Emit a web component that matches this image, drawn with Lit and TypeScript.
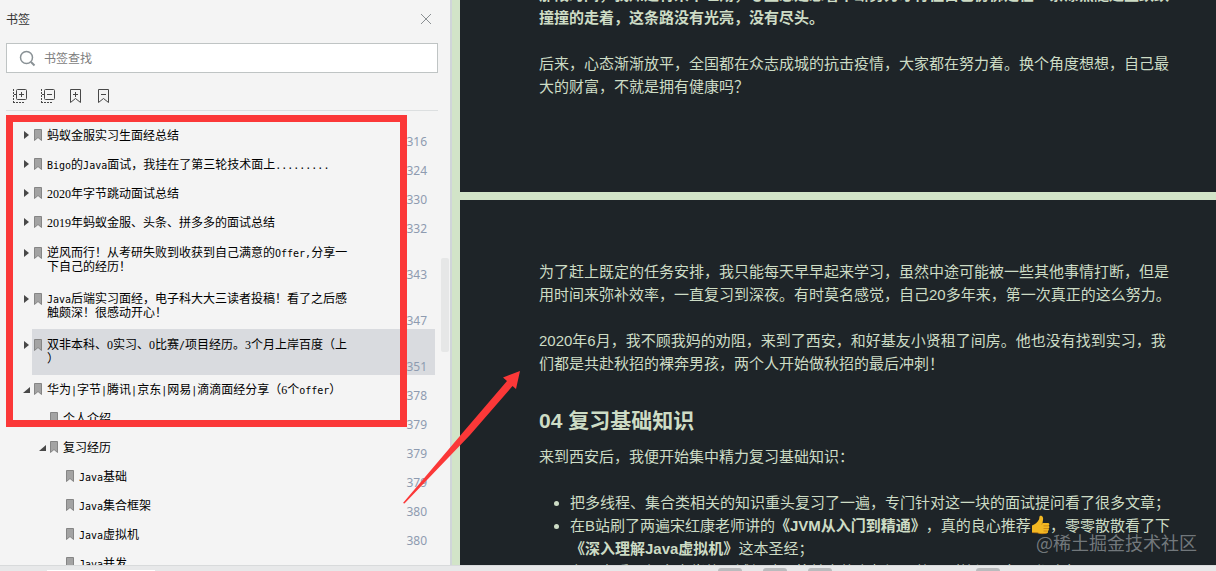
import { LitElement, html, svg, css } from "lit";
import { customElement, property } from "lit/decorators.js";
import { classMap } from "lit/directives/class-map.js";

interface Bookmark {
  lines: string[];
  page: string;
  level: number;
  fold: "closed" | "open" | "none";
  selected?: boolean;
}

const BOOKMARKS: Bookmark[] = [
  { lines: ["蚂蚁金服实习生面经总结"], page: "316", level: 0, fold: "closed" },
  { lines: ["Bigo的Java面试，我挂在了第三轮技术面上........."], page: "324", level: 0, fold: "closed" },
  { lines: ["2020年字节跳动面试总结"], page: "330", level: 0, fold: "closed" },
  { lines: ["2019年蚂蚁金服、头条、拼多多的面试总结"], page: "332", level: 0, fold: "closed" },
  { lines: ["逆风而行！从考研失败到收获到自己满意的Offer,分享一", "下自己的经历！"], page: "343", level: 0, fold: "closed" },
  { lines: ["Java后端实习面经，电子科大大三读者投稿！看了之后感", "触颇深！很感动开心！"], page: "347", level: 0, fold: "closed" },
  { lines: ["双非本科、0实习、0比赛/项目经历。3个月上岸百度（上", "）"], page: "351", level: 0, fold: "closed", selected: true },
  { lines: ["华为|字节|腾讯|京东|网易|滴滴面经分享（6个offer）"], page: "378", level: 0, fold: "open" },
  { lines: ["个人介绍"], page: "379", level: 1, fold: "none" },
  { lines: ["复习经历"], page: "379", level: 1, fold: "open" },
  { lines: ["Java基础"], page: "379", level: 2, fold: "none" },
  { lines: ["Java集合框架"], page: "380", level: 2, fold: "none" },
  { lines: ["Java虚拟机"], page: "380", level: 2, fold: "none" },
  { lines: ["Java并发"], page: "", level: 2, fold: "none" },
];

@customElement("bookmark-row")
class BookmarkRow extends LitElement {
  @property({ attribute: false }) item!: Bookmark;

  static styles = css`
    :host { display: block; flex-shrink: 0; }
    .row { display: grid; grid-template-columns: auto 1fr auto; min-height: 29px; margin-right: 15px; align-items: center; }
    .two { min-height: 46px; }
    .selected { background: linear-gradient(to right, transparent 32px, #d9dbdf 32px); }
    .lead { display: flex; align-items: center; height: 14px; align-self: start; margin-top: 7px; padding-left: 22px; }
    .two .lead { margin-top: 9px; }
    .l1 .lead { padding-left: 38px; }
    .l2 .lead { padding-left: 54px; }
    .fold { width: 12px; height: 14px; padding: 0; border: 0; background: none; display: block; }
    .gap { width: 12px; }
    .fold svg, .mark { display: block; }
    .text { font: 12px/14px "Liberation Serif", "Noto Sans CJK SC", serif; color: #000; white-space: nowrap; margin-left: 5px; text-decoration: none; }
    .line { display: block; height: 14px; }
    .latin { font: 10px/14px "DejaVu Sans Mono", monospace; }
    .page { font: 12px/16px "Noto Sans", sans-serif; color: #8e9bb0; align-self: end; padding-right: 8px; }
  `;

  private runs(line: string) {
    return line
      .split(/([A-Za-z|.,/]+)/)
      .map((part, i) => (i % 2 ? html`<span class="latin">${part}</span>` : part));
  }

  render() {
    const b = this.item;
    const arrow = b.fold === "closed"
      ? svg`<path d="M2 3v8l5-4z" fill="#484848"/>`
      : svg`<path d="M8 5v6H1z" fill="#484848"/>`;
    return html`
      <div class=${classMap({ row: true, two: b.lines.length > 1, selected: !!b.selected, l1: b.level === 1, l2: b.level === 2 })}>
        <div class="lead">
          ${b.fold === "none"
            ? html`<span class="gap"></span>`
            : html`<button class="fold" aria-label="展开或折叠"><svg width="12" height="14">${arrow}</svg></button>`}
          <svg class="mark" width="8" height="14" viewBox="0 0 8 14">
            <path d="M.5 1.5h7v11L4 9.5.5 12.5z" fill="#a3a3a3" stroke="#858585"/>
          </svg>
        </div>
        <a class="text" href="#">${b.lines.map((l) => html`<span class="line">${this.runs(l)}</span>`)}</a>
        <span class="page">${b.page}</span>
      </div>`;
  }
}

@customElement("bookmark-panel")
class BookmarkPanel extends LitElement {
  static styles = css`
    :host { display: flex; flex-direction: column; position: relative; overflow: hidden; background: #f4f4f4; border-right: 2px solid #d0d5d9; font: 12px/16px "Noto Sans CJK SC", sans-serif; }
    .head, .search, .tools { flex-shrink: 0; }
    .head { display: flex; justify-content: space-between; align-items: center; height: 37px; padding: 0 18px 0 6px; color: #333; }
    .title { font: inherit; margin: 0; }
    button { display: block; padding: 0; border: 0; background: none; }
    svg { display: block; }
    .search { display: flex; align-items: center; gap: 8px; box-sizing: border-box; height: 30px; margin: 6px 12px 0 6px; padding-left: 12px; background: #fff; border: 1px solid #bfc4c4; }
    .field { flex: 1; min-width: 0; border: 0; padding: 0; outline: 0; background: none; font: inherit; color: #333; }
    .field::placeholder { color: #7d7d7d; opacity: 1; }
    .tools { display: flex; align-items: flex-start; gap: 12px; height: 38px; box-sizing: border-box; padding: 15px 0 0 6px; margin: 0 12px 10px 6px; border-bottom: 1px solid #dcdfe0; }
    .thumb { position: absolute; right: 1px; top: 258px; width: 8px; height: 94px; border-radius: 2px; background: #e6e7e7; }
  `;

  private tool(label: string, kind: "tree" | "mark", plus: boolean) {
    const body = kind === "tree"
      ? svg`<rect x="4.5" y="1.5" width="10" height="10" rx="1"/><path d="M1.5 1v14M1 14.5h12" stroke-dasharray="2 1"/><path d="M7 6.5h5M2 6.5h2"/>${plus ? svg`<path d="M9.5 4v5"/>` : ""}`
      : svg`<path d="M2.5 1.5h10v13l-5-4-5 4z"/><path d="M5 6.5h5"/>${plus ? svg`<path d="M7.5 4v5"/>` : ""}`;
    return html`<button aria-label=${label}><svg width="16" height="16" viewBox="0 0 16 16" fill="none" stroke="#484848">${body}</svg></button>`;
  }

  render() {
    return html`
      <div class="head">
        <h2 class="title">书签</h2>
        <button aria-label="关闭"><svg width="12" height="12" fill="none" stroke="#8a8f92"><path d="M1 1l10 10M11 1L1 11"/></svg></button>
      </div>
      <label class="search">
        <svg width="17" height="17" viewBox="0 0 17 17" fill="none" stroke="#899195" stroke-width="1.5"><circle cx="7.5" cy="7.500" r="6"/><path d="M12 12l3.500 3.500" stroke-width="2"/></svg>
        <input class="field" type="text" placeholder="书签查找" aria-label="书签查找" />
      </label>
      <div class="tools">
        ${this.tool("全部展开", "tree", true)}${this.tool("全部折叠", "tree", false)}
        ${this.tool("添加书签", "mark", true)}${this.tool("删除书签", "mark", false)}
      </div>
      ${BOOKMARKS.map((b) => html`<bookmark-row .item=${b}></bookmark-row>`)}
      <div class="thumb"></div>`;
  }
}

@customElement("document-view")
class DocumentView extends LitElement {
  static styles = css`
    :host { display: block; position: relative; overflow: hidden; background: #d2e4c8; padding-left: 8px; font: 15px/23px "Liberation Sans", "Noto Sans CJK SC", sans-serif; color: #cddcc5; white-space: nowrap; text-spacing-trim: space-all; }
    .page { background: #1e2428; padding-left: 79px; }
    .first { margin-top: -17px; padding-bottom: 94px; }
    .second { margin-top: 8px; padding-top: 60px; padding-bottom: 60px; }
    p { margin: 0 0 23px; }
    strong { font-weight: 700; }
    h2 { font-size: 21px; line-height: 30px; margin: 31px 0 9px; }
    .first p:last-child { margin: 0; }
    ul { margin: 0; padding-left: 31px; }
    .thumbs { display: inline-block; width: 19px; height: 20px; vertical-align: -4px; }
    .watermark { position: absolute; right: 19px; bottom: 9px; font: 18px/28px "Noto Sans CJK SC", sans-serif; color: rgba(170, 176, 180, 0.62); }
  `;

  render() {
    return html`
      <article class="page first">
        <p><strong>那段时间，我知道将来不坦荡，心里总是想着不断努力才行但自己仿佛走在一条漆黑隧道里跌跌<br />撞撞的走着，这条路没有光亮，没有尽头。</strong></p>
        <p>后来，心态渐渐放平，全国都在众志成城的抗击疫情，大家都在努力着。换个角度想想，自己最<br />大的财富，不就是拥有健康吗？</p>
      </article>
      <article class="page second">
        <p>为了赶上既定的任务安排，我只能每天早早起来学习，虽然中途可能被一些其他事情打断，但是<br />用时间来弥补效率，一直复习到深夜。有时莫名感觉，自己20多年来，第一次真正的这么努力。</p>
        <p>2020年6月，我不顾我妈的劝阻，来到了西安，和好基友小贤租了间房。他也没有找到实习，我<br />们都是共赴秋招的裸奔男孩，两个人开始做秋招的最后冲刺！</p>
        <h2>04 复习基础知识</h2>
        <p>来到西安后，我便开始集中精力复习基础知识：</p>
        <ul>
          <li>把多线程、集合类相关的知识重头复习了一遍，专门针对这一块的面试提问看了很多文章；</li>
          <li>在B站刷了两遍宋红康老师讲的<strong>《JVM从入门到精通》</strong>，真的良心推荐<svg class="thumbs" viewBox="0 0 19 20" role="img" aria-label="点赞"><path d="M1 10.500C4 9.500 6.500 7.500 8 4.500 8.600 3 8 .8 9.700.8c2.200 0 2.700 2.300 2.300 4.200L11.500 8h5.300c2 0 2 2.500.6 2.800 1.400.5 1.200 2.400-.1 2.700 1 .6.7 2.200-.5 2.500.7.800.2 2.200-1.200 2.300-3.500.5-7 .5-9.300-.5L1 17.500z" fill="#f3b822"/><path d="M11.500 8l-.8 1.500M12.500 10.900h5M12.500 13.500h4.800M12.500 16h4M1 17.500l5.300.3c2.300 1 5.800 1 9.300.5" fill="none" stroke="#c57e14" stroke-width=".8"/></svg>，零零散散看了下<br /><strong>《深入理解Java虚拟机》</strong>这本圣经；</li>
          <li>在网上看了很多大佬的面试经验，将其中的高频问题整理到笔记，每天都会复习</li>
        </ul>
      </article>
      <div class="watermark">@稀土掘金技术社区</div>`;
  }
}

@customElement("app-root")
class AppRoot extends LitElement {
  static styles = css`
    :host { display: flex; flex-direction: column; position: relative; height: 100vh; overflow: hidden; }
    .main { flex: 1; min-height: 0; display: grid; grid-template-columns: 452px minmax(0, 1fr); }
    .status { display: flex; align-items: flex-end; box-sizing: border-box; height: 6px; background: #e7e8e9; border-top: 1px solid #d8dadb; }
    .tab { width: 108px; height: 1px; margin-left: 47px; background: #fff; }
    .keys { display: flex; gap: 21px; margin-left: 563px; }
    .key { width: 24px; height: 3px; border-radius: 3px 3px 0 0; background: #b9bbbd; }
    .key:last-child { margin-left: 123px; }
    .frame { position: absolute; left: 6px; top: 115px; width: 401px; height: 312px; box-sizing: border-box; border: 7px solid #fb3838; pointer-events: none; }
    .arrow { position: absolute; left: 403px; top: 370px; pointer-events: none; }
  `;

  render() {
    return html`
      <div class="main">
        <bookmark-panel></bookmark-panel>
        <document-view></document-view>
      </div>
      <div class="status">
        <div class="tab"></div>
        <div class="keys"><i class="key"></i><i class="key"></i><i class="key"></i><i class="key"></i></div>
      </div>
      <div class="frame"></div>
      <svg class="arrow" width="118" height="134" viewBox="0 0 118 134">
        <path d="M117 1L100 7.500 104 11 62 60 0 133 1.500 133.500 67 65 109.500 16 113 19z" fill="#fb3838"/>
      </svg>`;
  }
}
